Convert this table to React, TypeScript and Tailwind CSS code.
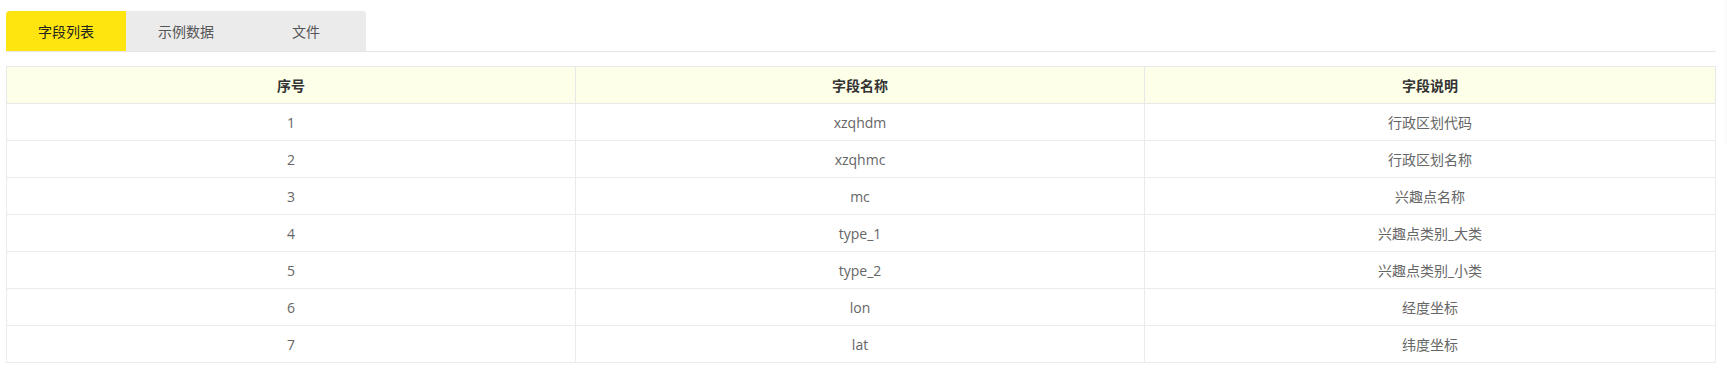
import { useState } from "react";

const tabs = ["字段列表", "示例数据", "文件"];

const fields = [
  { name: "xzqhdm", desc: "行政区划代码" },
  { name: "xzqhmc", desc: "行政区划名称" },
  { name: "mc", desc: "兴趣点名称" },
  { name: "type_1", desc: "兴趣点类别_大类" },
  { name: "type_2", desc: "兴趣点类别_小类" },
  { name: "lon", desc: "经度坐标" },
  { name: "lat", desc: "纬度坐标" },
];

export default function App() {
  const [active, setActive] = useState(0);

  return (
    <div
      className="w-[1727px] h-[372px] bg-white flex"
      style={{ fontFamily: '"Open Sans", "Noto Sans CJK SC", sans-serif' }}
    >
      <div className="flex-1 pl-[6px] pr-[9px] pt-[11px]">
        {/* 页签 */}
        <div className="flex border-b border-[#e6e6e6] h-[41px]">
          <div className="flex rounded-t-[4px] overflow-hidden bg-[#ebebeb]">
            {tabs.map((t, i) => (
              <button
                key={t}
                onClick={() => setActive(i)}
                className={
                  i === active
                    ? "w-[120px] h-[40px] text-[14px] text-[#222] bg-[#ffe50f]"
                    : "w-[120px] h-[40px] text-[14px] text-[#555] bg-[#ebebeb]"
                }
              >
                {t}
              </button>
            ))}
          </div>
        </div>

        {/* 字段表 */}
        <table className="mt-[14px] w-full border-collapse table-fixed text-[14px]">
          <colgroup>
            <col className="w-[569px]" />
            <col className="w-[569px]" />
            <col />
          </colgroup>
          <thead>
            <tr className="bg-[#fdffe8] h-[37px]">
              <th className="border border-[#e8e8e8] font-bold text-[#333]">序号</th>
              <th className="border border-[#e8e8e8] font-bold text-[#333]">字段名称</th>
              <th className="border border-[#e8e8e8] font-bold text-[#333]">字段说明</th>
            </tr>
          </thead>
          <tbody>
            {fields.map((f, i) => (
              <tr key={f.name} className="h-[37px] text-[#666]">
                <td className="border border-[#ebebeb] text-center">{i + 1}</td>
                <td className="border border-[#ebebeb] text-center">{f.name}</td>
                <td className="border border-[#ebebeb] text-center">{f.desc}</td>
              </tr>
            ))}
          </tbody>
        </table>
      </div>
      <div className="w-[2px] h-[145px] bg-[#fafafa]" />
    </div>
  );
}
